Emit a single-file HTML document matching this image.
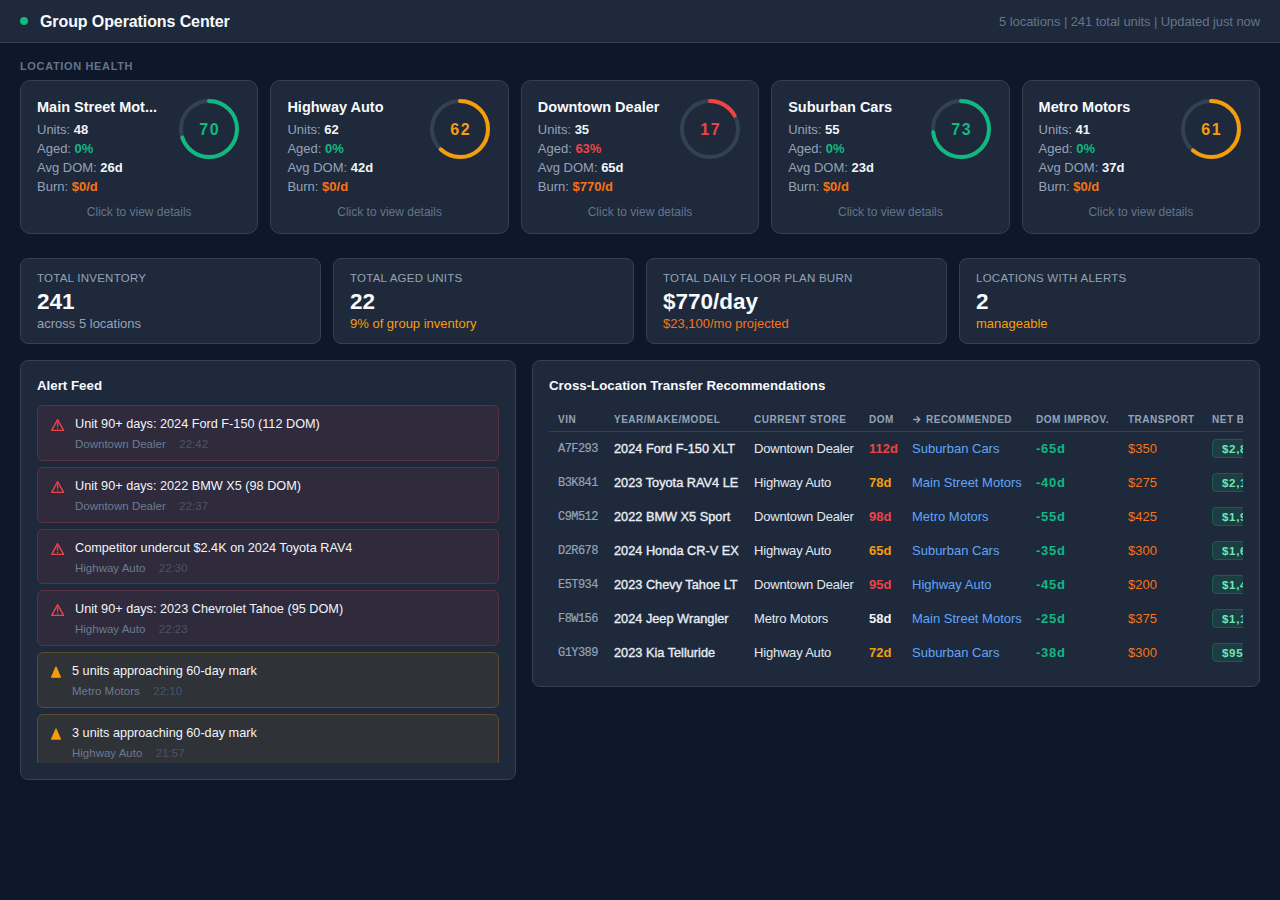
<!DOCTYPE html>
<html>
<head>
<meta charset="utf-8">
<style>
*{box-sizing:border-box;margin:0;padding:0}
html,body{width:1280px;height:900px;overflow:hidden}
body{background:#0f172a;font-family:"Liberation Sans",sans-serif;color:#e2e8f0;position:relative}
.hdr{position:absolute;left:0;top:0;width:1280px;height:43px;background:#1e293b;border-bottom:1px solid #334155}
.hdr .dot{position:absolute;left:20px;top:17px;width:8px;height:8px;border-radius:50%;background:#10b981}
.hdr .ttl{position:absolute;left:40px;top:10.5px;font-size:16px;letter-spacing:-0.1px;font-weight:700;color:#f8fafc;line-height:22px;white-space:nowrap}
.hdr .meta{position:absolute;right:20px;top:13.3px;letter-spacing:-0.08px;font-size:13px;color:#64748b;line-height:18px;white-space:nowrap}
.sec{position:absolute;left:20px;top:58.3px;font-size:11px;font-weight:700;letter-spacing:0.65px;color:#64748b;line-height:16px}
.card{position:absolute;top:80px;width:238.4px;height:154px;background:#1e293b;border:1px solid #334155;border-radius:10px}
.card .ttl{position:absolute;left:16px;top:16.5px;font-size:14.5px;font-weight:700;color:#f8fafc;line-height:18px;white-space:nowrap}
.card .ln{position:absolute;left:16px;font-size:13px;color:#94a3b8;line-height:18px;white-space:nowrap}
.card .ln b{color:#f1f5f9}
.card svg{position:absolute;right:16px;top:16px}
.card .click{position:absolute;left:0;right:0;top:122.5px;text-align:center;font-size:12px;color:#64748b;line-height:16px}
.g{color:#10b981!important}.r{color:#ef4444!important}.o{color:#f97316!important}.a{color:#f59e0b!important}
.stat{position:absolute;top:258px;width:301px;height:86px;background:#1e293b;border:1px solid #334155;border-radius:8px}
.stat .lbl{position:absolute;left:16px;top:11px;font-size:11.5px;letter-spacing:0.25px;color:#94a3b8;line-height:16px;white-space:nowrap}
.stat .val{position:absolute;left:16px;top:29.7px;font-size:22.5px;font-weight:700;color:#f8fafc;line-height:26px;white-space:nowrap}
.stat .sub{position:absolute;left:16px;top:56.3px;font-size:13px;color:#94a3b8;line-height:18px;white-space:nowrap}
.panel{position:absolute;top:360px;background:#1e293b;border:1px solid #334155;border-radius:8px}
.panel .pt{position:absolute;left:16px;top:16px;font-size:13.3px;font-weight:700;color:#f8fafc;line-height:18px;white-space:nowrap}

.alist{position:absolute;left:16px;top:44px;width:462px;height:358px;overflow:hidden}
.al{position:relative;height:55.8px;margin-bottom:6px;border:1px solid;border-radius:6px;padding:0 12px}
.al.r{background:#2f2b3c;border-color:#5d313e}
.al.a{background:#2f3237;border-color:#5e4c2d}
.al .ic{position:absolute;left:12px;top:12px}
.al.a .ic{left:12px;top:11px}
.al .ab{position:absolute;left:37px;top:9px}
.al.a .ab{left:34px}
.al .at{font-size:12.7px;line-height:18px;color:#f1f5f9;white-space:nowrap}
.al .am{margin-top:4px;font-size:11.5px;line-height:15px;color:#6b7b92;white-space:nowrap}
.al .am .tm{margin-left:13.5px;color:#475569}
.tclip{position:absolute;left:16px;top:44px;width:694px;height:270px;overflow:hidden}
.thead{position:absolute;left:0;top:0;width:800px;height:27px;border-bottom:1px solid #334155}
.th{position:absolute;top:9px;font-size:10px;font-weight:700;letter-spacing:0.5px;color:#94a3b8;line-height:12px;white-space:nowrap}
.tr{position:absolute;left:0;width:800px;height:34px}
.td{position:absolute;top:0;font-size:13px;line-height:34px;color:#e2e8f0;white-space:nowrap}
.td.vin{font-family:"Liberation Mono",monospace;font-size:12px;letter-spacing:-0.55px;-webkit-text-stroke:0.2px #94a3b8;color:#94a3b8}
.td.ymm{font-weight:400;font-size:12.75px;-webkit-text-stroke:0.35px #e9eef5;color:#e9eef5}
.td.dom{font-weight:700}
.td.w{color:#f1f5f9}
.td.rec{color:#60a5fa}
.td.st{letter-spacing:-0.2px}
.td.imp{color:#10b981;font-weight:700;letter-spacing:0.7px}
.td.trn{color:#f97316}
.badge{display:inline-block;vertical-align:middle;height:19px;line-height:16px;padding:1.3px 8px 0 9px;border:1px solid #1b5c50;background:#1c3e43;border-radius:4px;font-size:11.5px;letter-spacing:0.7px;font-weight:700;color:#6ee7b7;position:relative;top:-1px}
</style>
</head>
<body>
<div class="hdr">
  <div class="dot"></div>
  <div class="ttl">Group Operations Center</div>
  <div class="meta">5 locations | 241 total units | Updated just now</div>
</div>
<div class="sec">LOCATION HEALTH</div>

<div class="card" style="left:20px">
  <div class="ttl">Main Street Mot...</div>
  <div class="ln" style="top:40px">Units: <b>48</b></div>
  <div class="ln" style="top:59px">Aged: <b class="g">0%</b></div>
  <div class="ln" style="top:77.8px">Avg DOM: <b>26d</b></div>
  <div class="ln" style="top:97px">Burn: <b class="o">$0/d</b></div>
  <svg width="64" height="64" viewBox="0 0 64 64"><circle cx="32" cy="32" r="28" fill="none" stroke="#334155" stroke-width="4"/><circle cx="32" cy="32" r="28" fill="none" stroke="#10b981" stroke-width="4" stroke-linecap="round" stroke-dasharray="123.15 175.93" transform="rotate(-90 32 32)"/><text x="32" y="37.9" text-anchor="middle" textLength="19.5" lengthAdjust="spacing" font-family="Liberation Sans" font-size="16" font-weight="700" fill="#10b981">70</text></svg>
  <div class="click">Click to view details</div>
</div>
<div class="card" style="left:270.4px">
  <div class="ttl">Highway Auto</div>
  <div class="ln" style="top:40px">Units: <b>62</b></div>
  <div class="ln" style="top:59px">Aged: <b class="g">0%</b></div>
  <div class="ln" style="top:77.8px">Avg DOM: <b>42d</b></div>
  <div class="ln" style="top:97px">Burn: <b class="o">$0/d</b></div>
  <svg width="64" height="64" viewBox="0 0 64 64"><circle cx="32" cy="32" r="28" fill="none" stroke="#334155" stroke-width="4"/><circle cx="32" cy="32" r="28" fill="none" stroke="#f59e0b" stroke-width="4" stroke-linecap="round" stroke-dasharray="109.08 175.93" transform="rotate(-90 32 32)"/><text x="32" y="37.9" text-anchor="middle" textLength="19.5" lengthAdjust="spacing" font-family="Liberation Sans" font-size="16" font-weight="700" fill="#f59e0b">62</text></svg>
  <div class="click">Click to view details</div>
</div>
<div class="card" style="left:520.8px">
  <div class="ttl">Downtown Dealer</div>
  <div class="ln" style="top:40px">Units: <b>35</b></div>
  <div class="ln" style="top:59px">Aged: <b class="r">63%</b></div>
  <div class="ln" style="top:77.8px">Avg DOM: <b>65d</b></div>
  <div class="ln" style="top:97px">Burn: <b class="o">$770/d</b></div>
  <svg width="64" height="64" viewBox="0 0 64 64"><circle cx="32" cy="32" r="28" fill="none" stroke="#334155" stroke-width="4"/><circle cx="32" cy="32" r="28" fill="none" stroke="#ef4444" stroke-width="4" stroke-linecap="round" stroke-dasharray="29.91 175.93" transform="rotate(-90 32 32)"/><text x="32" y="37.9" text-anchor="middle" textLength="19.5" lengthAdjust="spacing" font-family="Liberation Sans" font-size="16" font-weight="700" fill="#ef4444">17</text></svg>
  <div class="click">Click to view details</div>
</div>
<div class="card" style="left:771.2px">
  <div class="ttl">Suburban Cars</div>
  <div class="ln" style="top:40px">Units: <b>55</b></div>
  <div class="ln" style="top:59px">Aged: <b class="g">0%</b></div>
  <div class="ln" style="top:77.8px">Avg DOM: <b>23d</b></div>
  <div class="ln" style="top:97px">Burn: <b class="o">$0/d</b></div>
  <svg width="64" height="64" viewBox="0 0 64 64"><circle cx="32" cy="32" r="28" fill="none" stroke="#334155" stroke-width="4"/><circle cx="32" cy="32" r="28" fill="none" stroke="#10b981" stroke-width="4" stroke-linecap="round" stroke-dasharray="128.43 175.93" transform="rotate(-90 32 32)"/><text x="32" y="37.9" text-anchor="middle" textLength="19.5" lengthAdjust="spacing" font-family="Liberation Sans" font-size="16" font-weight="700" fill="#10b981">73</text></svg>
  <div class="click">Click to view details</div>
</div>
<div class="card" style="left:1021.6px">
  <div class="ttl">Metro Motors</div>
  <div class="ln" style="top:40px">Units: <b>41</b></div>
  <div class="ln" style="top:59px">Aged: <b class="g">0%</b></div>
  <div class="ln" style="top:77.8px">Avg DOM: <b>37d</b></div>
  <div class="ln" style="top:97px">Burn: <b class="o">$0/d</b></div>
  <svg width="64" height="64" viewBox="0 0 64 64"><circle cx="32" cy="32" r="28" fill="none" stroke="#334155" stroke-width="4"/><circle cx="32" cy="32" r="28" fill="none" stroke="#f59e0b" stroke-width="4" stroke-linecap="round" stroke-dasharray="107.32 175.93" transform="rotate(-90 32 32)"/><text x="32" y="37.9" text-anchor="middle" textLength="19.5" lengthAdjust="spacing" font-family="Liberation Sans" font-size="16" font-weight="700" fill="#f59e0b">61</text></svg>
  <div class="click">Click to view details</div>
</div>

<div class="stat" style="left:20px"><div class="lbl">TOTAL INVENTORY</div><div class="val">241</div><div class="sub ">across 5 locations</div></div>
<div class="stat" style="left:333px"><div class="lbl">TOTAL AGED UNITS</div><div class="val">22</div><div class="sub a">9% of group inventory</div></div>
<div class="stat" style="left:646px"><div class="lbl">TOTAL DAILY FLOOR PLAN BURN</div><div class="val">$770/day</div><div class="sub o">$23,100/mo projected</div></div>
<div class="stat" style="left:959px"><div class="lbl">LOCATIONS WITH ALERTS</div><div class="val">2</div><div class="sub a">manageable</div></div>

<div class="panel" style="left:20px;width:496px;height:420px"><div class="pt">Alert Feed</div><div class="alist"><div class="al r"><svg class="ic" width="15" height="14" viewBox="0 0 15 14"><path d="M7.6 1.6 L13.6 12.35 H1.7 Z" fill="none" stroke="#ef4444" stroke-width="1.35" stroke-linejoin="round"/><path d="M7.6 4.7 V8.3" stroke="#ef4444" stroke-width="1.2" stroke-linecap="round"/><circle cx="7.6" cy="10.4" r="0.65" fill="#ef4444"/></svg><div class="ab"><div class="at">Unit 90+ days: 2024 Ford F-150 (112 DOM)</div><div class="am"><span>Downtown Dealer</span><span class="tm">22:42</span></div></div></div><div class="al r"><svg class="ic" width="15" height="14" viewBox="0 0 15 14"><path d="M7.6 1.6 L13.6 12.35 H1.7 Z" fill="none" stroke="#ef4444" stroke-width="1.35" stroke-linejoin="round"/><path d="M7.6 4.7 V8.3" stroke="#ef4444" stroke-width="1.2" stroke-linecap="round"/><circle cx="7.6" cy="10.4" r="0.65" fill="#ef4444"/></svg><div class="ab"><div class="at">Unit 90+ days: 2022 BMW X5 (98 DOM)</div><div class="am"><span>Downtown Dealer</span><span class="tm">22:37</span></div></div></div><div class="al r"><svg class="ic" width="15" height="14" viewBox="0 0 15 14"><path d="M7.6 1.6 L13.6 12.35 H1.7 Z" fill="none" stroke="#ef4444" stroke-width="1.35" stroke-linejoin="round"/><path d="M7.6 4.7 V8.3" stroke="#ef4444" stroke-width="1.2" stroke-linecap="round"/><circle cx="7.6" cy="10.4" r="0.65" fill="#ef4444"/></svg><div class="ab"><div class="at">Competitor undercut $2.4K on 2024 Toyota RAV4</div><div class="am"><span>Highway Auto</span><span class="tm">22:30</span></div></div></div><div class="al r"><svg class="ic" width="15" height="14" viewBox="0 0 15 14"><path d="M7.6 1.6 L13.6 12.35 H1.7 Z" fill="none" stroke="#ef4444" stroke-width="1.35" stroke-linejoin="round"/><path d="M7.6 4.7 V8.3" stroke="#ef4444" stroke-width="1.2" stroke-linecap="round"/><circle cx="7.6" cy="10.4" r="0.65" fill="#ef4444"/></svg><div class="ab"><div class="at">Unit 90+ days: 2023 Chevrolet Tahoe (95 DOM)</div><div class="am"><span>Highway Auto</span><span class="tm">22:23</span></div></div></div><div class="al a"><svg class="ic" width="12" height="14" viewBox="0 0 12 14"><path d="M6 2.8 L10.6 13.2 H1.4 Z" fill="#f59e0b" stroke="#f59e0b" stroke-width="1" stroke-linejoin="round"/></svg><div class="ab"><div class="at">5 units approaching 60-day mark</div><div class="am"><span>Metro Motors</span><span class="tm">22:10</span></div></div></div><div class="al a"><svg class="ic" width="12" height="14" viewBox="0 0 12 14"><path d="M6 2.8 L10.6 13.2 H1.4 Z" fill="#f59e0b" stroke="#f59e0b" stroke-width="1" stroke-linejoin="round"/></svg><div class="ab"><div class="at">3 units approaching 60-day mark</div><div class="am"><span>Highway Auto</span><span class="tm">21:57</span></div></div></div><div class="al a"><svg class="ic" width="12" height="14" viewBox="0 0 12 14"><path d="M6 2.8 L10.6 13.2 H1.4 Z" fill="#f59e0b" stroke="#f59e0b" stroke-width="1" stroke-linejoin="round"/></svg><div class="ab"><div class="at">2 units approaching 60-day mark</div><div class="am"><span>Suburban Cars</span><span class="tm">21:40</span></div></div></div></div></div>
<div class="panel" style="left:532px;width:728px;height:327px"><div class="pt">Cross-Location Transfer Recommendations</div><div class="tclip"><div class="thead"><div class="th" style="left:9px">VIN</div><div class="th" style="left:65px">YEAR/MAKE/MODEL</div><div class="th" style="left:205px">CURRENT STORE</div><div class="th" style="left:320px">DOM</div><div class="th" style="left:363px"><svg width="8" height="7" viewBox="0 0 8 7" style="display:inline-block;vertical-align:0;margin-right:5px;margin-left:1px"><path d="M0.6 3.5 H6.8 M4 0.8 L6.8 3.5 L4 6.2" fill="none" stroke="#94a3b8" stroke-width="1.3" stroke-linecap="round" stroke-linejoin="round"/></svg>RECOMMENDED</div><div class="th" style="left:487px">DOM IMPROV.</div><div class="th" style="left:579px">TRANSPORT</div><div class="th" style="left:663px">NET BENEFIT</div></div><div class="tr" style="top:27px"><div class="td vin" style="left:9px">A7F293</div><div class="td ymm" style="left:65px">2024 Ford F-150 XLT</div><div class="td st" style="left:205px">Downtown Dealer</div><div class="td dom r" style="left:320px">112d</div><div class="td rec" style="left:363px">Suburban Cars</div><div class="td imp" style="left:487px">-65d</div><div class="td trn" style="left:579px">$350</div><div class="td" style="left:663px"><span class="badge">$2,840</span></div></div><div class="tr" style="top:61px"><div class="td vin" style="left:9px">B3K841</div><div class="td ymm" style="left:65px">2023 Toyota RAV4 LE</div><div class="td st" style="left:205px">Highway Auto</div><div class="td dom a" style="left:320px">78d</div><div class="td rec" style="left:363px">Main Street Motors</div><div class="td imp" style="left:487px">-40d</div><div class="td trn" style="left:579px">$275</div><div class="td" style="left:663px"><span class="badge">$2,165</span></div></div><div class="tr" style="top:95px"><div class="td vin" style="left:9px">C9M512</div><div class="td ymm" style="left:65px">2022 BMW X5 Sport</div><div class="td st" style="left:205px">Downtown Dealer</div><div class="td dom r" style="left:320px">98d</div><div class="td rec" style="left:363px">Metro Motors</div><div class="td imp" style="left:487px">-55d</div><div class="td trn" style="left:579px">$425</div><div class="td" style="left:663px"><span class="badge">$1,925</span></div></div><div class="tr" style="top:129px"><div class="td vin" style="left:9px">D2R678</div><div class="td ymm" style="left:65px">2024 Honda CR-V EX</div><div class="td st" style="left:205px">Highway Auto</div><div class="td dom a" style="left:320px">65d</div><div class="td rec" style="left:363px">Suburban Cars</div><div class="td imp" style="left:487px">-35d</div><div class="td trn" style="left:579px">$300</div><div class="td" style="left:663px"><span class="badge">$1,650</span></div></div><div class="tr" style="top:163px"><div class="td vin" style="left:9px">E5T934</div><div class="td ymm" style="left:65px">2023 Chevy Tahoe LT</div><div class="td st" style="left:205px">Downtown Dealer</div><div class="td dom r" style="left:320px">95d</div><div class="td rec" style="left:363px">Highway Auto</div><div class="td imp" style="left:487px">-45d</div><div class="td trn" style="left:579px">$200</div><div class="td" style="left:663px"><span class="badge">$1,455</span></div></div><div class="tr" style="top:197px"><div class="td vin" style="left:9px">F8W156</div><div class="td ymm" style="left:65px">2024 Jeep Wrangler</div><div class="td st" style="left:205px">Metro Motors</div><div class="td dom w" style="left:320px">58d</div><div class="td rec" style="left:363px">Main Street Motors</div><div class="td imp" style="left:487px">-25d</div><div class="td trn" style="left:579px">$375</div><div class="td" style="left:663px"><span class="badge">$1,175</span></div></div><div class="tr" style="top:231px"><div class="td vin" style="left:9px">G1Y389</div><div class="td ymm" style="left:65px">2023 Kia Telluride</div><div class="td st" style="left:205px">Highway Auto</div><div class="td dom a" style="left:320px">72d</div><div class="td rec" style="left:363px">Suburban Cars</div><div class="td imp" style="left:487px">-38d</div><div class="td trn" style="left:579px">$300</div><div class="td" style="left:663px"><span class="badge">$950</span></div></div></div></div>

</body>
</html>
